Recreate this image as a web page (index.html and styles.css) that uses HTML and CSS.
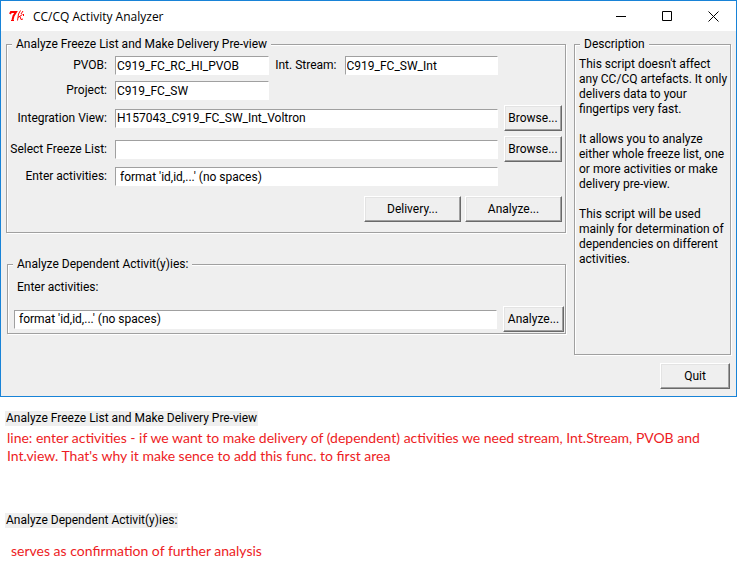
FILE: index.html
```
<!DOCTYPE html>
<html lang="en">
<head>
<meta charset="utf-8">
<title>CC/CQ Activity Analyzer</title>
<link rel="stylesheet" href="styles.css">
</head>
<body>
<main class="window">
  <header class="titlebar">
    <svg class="app-icon" viewBox="0 0 16 12" aria-hidden="true">
      <path class="bold" d="M1 4L2 2H7L4.500 6L3.500 10"/>
      <path d="M2 10.500H5M11.500 .5L9.500 4L8.500 10.500M9 7.500L13.500 4.500M11 6.500L12 9.500L14 9M14 1L12 4M14.500 4V6"/>
    </svg>
    <h1 class="title">CC/CQ Activity Analyzer</h1>
    <button class="caption" type="button" aria-label="Minimize"><svg viewBox="0 0 11 11"><path d="M0 5.500H10"/></svg></button>
    <button class="caption" type="button" aria-label="Maximize"><svg viewBox="0 0 11 11"><path d="M.5 .5H9.500V9.500H.5Z"/></svg></button>
    <button class="caption" type="button" aria-label="Close"><svg viewBox="0 0 11 11"><path d="M.5 .5L10.500 10.500M10.500 .5L.5 10.500"/></svg></button>
  </header>
  <form class="content">
    <div class="left">
      <fieldset class="group">
        <legend>Analyze Freeze List and Make Delivery Pre-view</legend>
        <div class="fields">
          <div class="row split">
            <label for="pvob">PVOB:</label>
            <input id="pvob" type="text" value="C919_FC_RC_HI_PVOB">
            <label for="stream">Int. Stream:</label>
            <input id="stream" type="text" value="C919_FC_SW_Int">
          </div>
          <div class="row split">
            <label for="project">Project:</label>
            <input id="project" type="text" value="C919_FC_SW">
          </div>
          <div class="row">
            <label for="view">Integration View:</label>
            <input id="view" type="text" value="H157043_C919_FC_SW_Int_Voltron">
            <button class="button" type="button">Browse...</button>
          </div>
          <div class="row">
            <label for="freeze">Select Freeze List:</label>
            <input id="freeze" type="text">
            <button class="button" type="button">Browse...</button>
          </div>
          <div class="row">
            <label for="activities">Enter activities:</label>
            <input id="activities" class="hint" type="text" value="format 'id,id,...' (no spaces)">
          </div>
        </div>
        <div class="actions">
          <button class="button wide" type="button">Delivery...</button>
          <button class="button wide" type="button">Analyze...</button>
        </div>
      </fieldset>
      <fieldset class="group dependent">
        <legend>Analyze Dependent Activit(y)ies:</legend>
        <label class="above" for="dependent">Enter activities:</label>
        <div class="entry">
          <input id="dependent" class="hint" type="text" value="format 'id,id,...' (no spaces)">
          <button class="button" type="button">Analyze...</button>
        </div>
      </fieldset>
    </div>
    <div class="right">
      <fieldset class="group description">
        <legend>Description</legend>
        <p>This script doesn't affect<br>any CC/CQ artefacts. It only<br>delivers data to your<br>fingertips very fast.</p>
        <p>It allows you to analyze<br>either whole freeze list, one<br>or more activities or make<br>delivery pre-view.</p>
        <p>This script will be used<br>mainly for determination of<br>dependencies on different<br>activities.</p>
      </fieldset>
      <button class="button quit" type="button">Quit</button>
    </div>
  </form>
</main>
<section class="notes">
  <h2 class="chip">Analyze Freeze List and Make Delivery Pre-view</h2>
  <p class="note">line: enter activities - if we want to make delivery of (dependent) activities we need stream, Int.Stream, PVOB and<br>Int.view. That's why it make sence to add this func. to first area</p>
  <h2 class="chip second">Analyze Dependent Activit(y)ies:</h2>
  <p class="note last">serves as confirmation of further analysis</p>
</section>
</body>
</html>
```
FILE: styles.css
```
* { box-sizing: border-box; }

body {
  margin: 0;
  background: #fff;
  color: #000;
  font: 12px/15px Roboto, sans-serif;
}

h1, h2, p { margin: 0; font-size: inherit; font-weight: normal; }

input, button { font: inherit; color: inherit; border-radius: 0; }

.window {
  margin-right: 4px;
  border: 1px solid #1883d7;
  background: #efefef;
}

/* Title bar */
.titlebar {
  display: flex;
  align-items: center;
  height: 30px;
  padding-left: 8px;
  background: #fff;
}

.app-icon {
  width: 16px;
  height: 12px;
  margin-right: 8px;
  fill: none;
  stroke: #f00;
  stroke-width: 1;
}

.bold { stroke-width: 2; }

.title { flex: 1; font-family: "Open Sans", sans-serif; }

.caption {
  display: flex;
  align-items: center;
  justify-content: center;
  width: 46px;
  height: 30px;
  padding: 0;
  border: 0;
  background: none;
}

.caption svg {
  width: 11px;
  height: 11px;
  fill: none;
  stroke: #000;
}

/* Main area */
.content {
  display: flex;
  gap: 8px;
  padding: 6px 5px 7px;
}

.left { flex: 1; min-width: 0; }

.right {
  display: flex;
  flex-direction: column;
  gap: 8px;
  width: 157px;
}

.group {
  min-width: 0;
  margin: 0;
  padding: 4px 3px 10px 0;
  border: 1px solid #a0a0a0;
  box-shadow: 1px 1px 0 #fff, inset 1px 1px 0 #fff;
}

.group legend {
  margin-left: 5px;
  padding: 0 4px;
  background: #efefef;
}

.fields { display: grid; gap: 5px; }

.row {
  display: grid;
  grid-template-columns: 102px 1fr 58px;
  align-items: center;
  gap: 6px;
}

.split { grid-template-columns: 102px 1fr 64px 1fr 58px; }

.split + .split { padding-top: 1px; }

.row label {
  padding-right: 2px;
  text-align: right;
  white-space: nowrap;
}

input {
  width: 100%;
  min-width: 0;
  height: 19px;
  padding: 0 1px;
  border: 1px solid #fff;
  border-top-color: #a0a0a0;
  border-left-color: #a0a0a0;
  background: #fff;
}

.hint { padding-left: 4px; }

.button {
  height: 26px;
  padding: 0;
  border: 1px solid #696969;
  border-top-color: #fff;
  border-left-color: #fff;
  background: #efefef;
  box-shadow: inset -1px -1px 0 #a0a0a0, inset 1px 1px 0 #e3e3e3;
  white-space: nowrap;
}

.wide { width: 97px; }

.actions {
  display: flex;
  justify-content: flex-end;
  gap: 4px;
  margin-top: 10px;
}

.dependent {
  margin: 24px 0 0 1px;
  padding: 8px 1px 1px 0;
}

.above { display: block; margin-left: 9px; }

.entry {
  display: grid;
  grid-template-columns: 1fr 61px;
  align-items: center;
  gap: 6px;
  margin-top: 11px;
  padding-left: 6px;
}

.description {
  min-height: 318px;
  padding: 5px 0 0;
}

.description p { padding-left: 4px; white-space: nowrap; }

.description p + p { margin-top: 15px; }

.quit {
  align-self: flex-end;
  width: 70px;
  margin-right: 1px;
}

/* Remarks below the window */
.notes { padding: 14px 5px 0; }

.chip {
  width: fit-content;
  padding: 0 1px;
  background: #efefef;
}

.second { margin-top: 48px; }

.note {
  margin-top: 3px;
  padding-left: 2px;
  color: #ed1c24;
  font: 14px/18px Lato, sans-serif;
}

.last { margin-top: 14px; padding-left: 6px; }
```
